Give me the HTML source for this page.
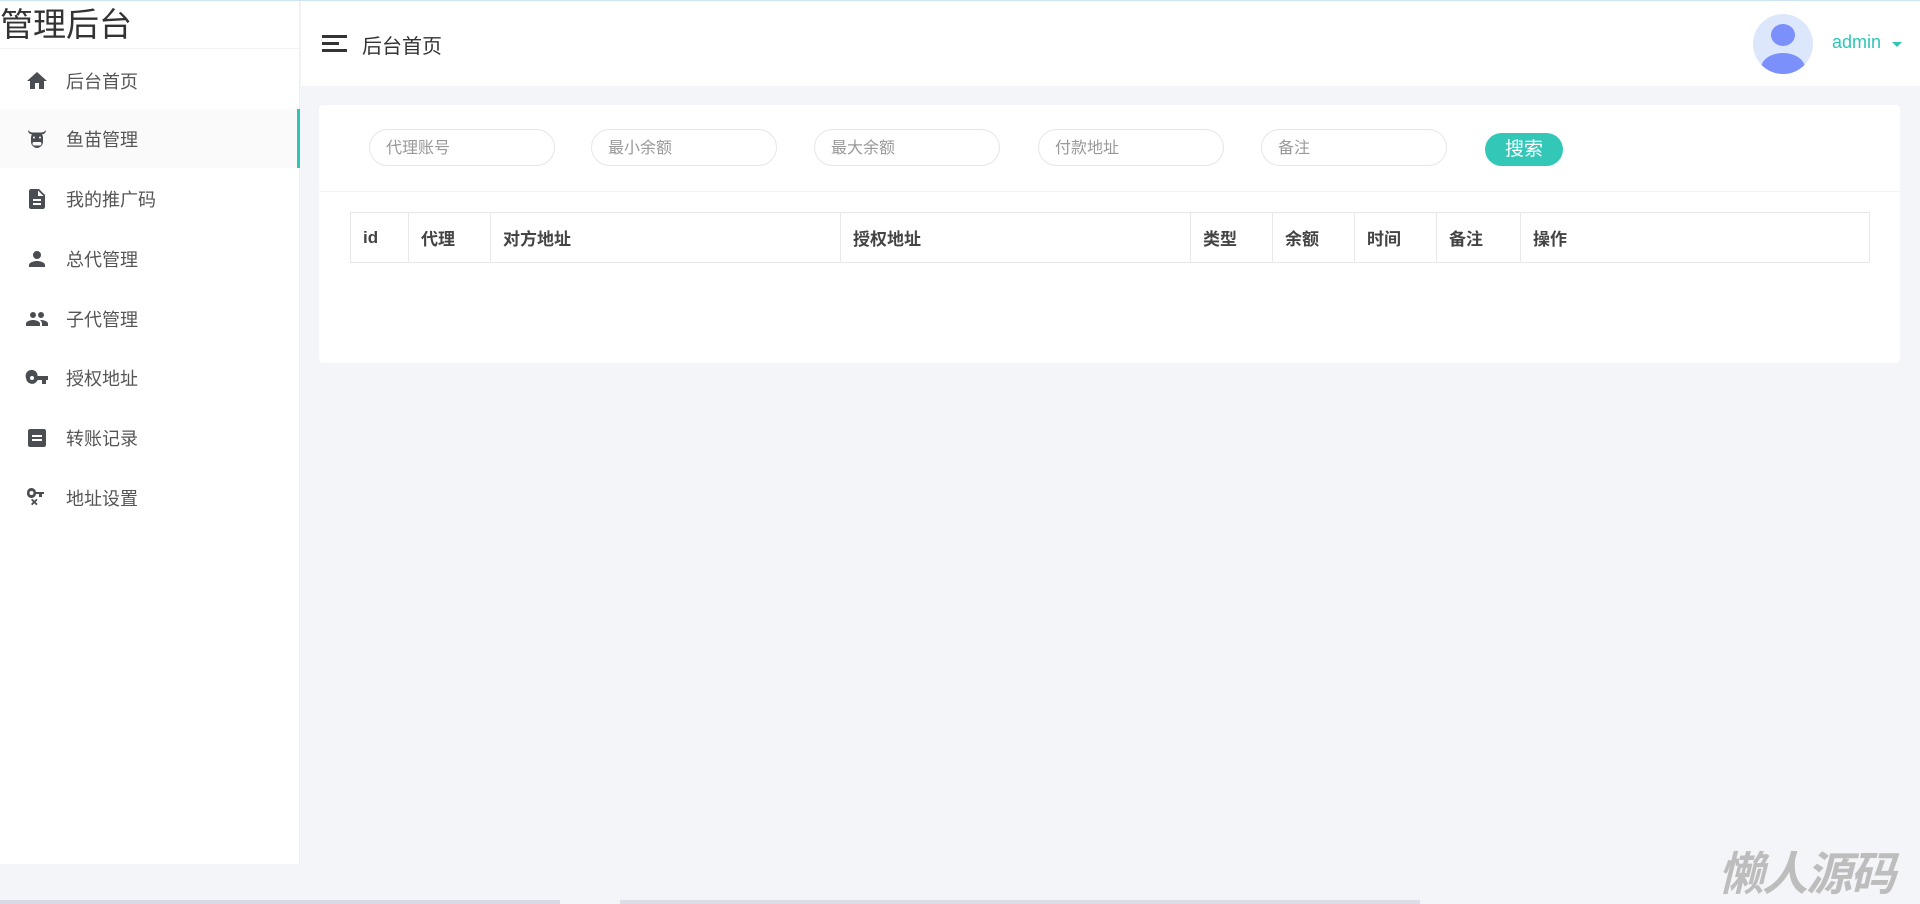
<!DOCTYPE html>
<html><head><meta charset="utf-8"><style>
*{margin:0;padding:0;box-sizing:border-box}
body{width:1920px;height:904px;overflow:hidden;background:#f4f5f9;font-family:"Liberation Sans","Noto Sans CJK SC",sans-serif;position:relative;color:#444}
.top{position:absolute;left:0;top:0;width:1920px;height:1px;background:#cfe3f3;z-index:5}
.side{position:absolute;left:0;top:0;width:300px;height:864px;background:#fff;border-right:1px solid #eceef2}
.logo{height:49px;font-size:33px;line-height:50px;color:#333;border-bottom:1px solid #f2f2f2;white-space:nowrap}
.item{position:absolute;left:0;width:300px;height:59px;display:flex;align-items:center;font-size:18px;color:#555}
.item svg{position:absolute;left:25px;top:50%;margin-top:-12px;width:24px;height:24px;fill:#4a4d52}
.item span{position:absolute;left:66px}
.act{background:#fafafa;border-right:3px solid #2ec5b6}
.head{position:absolute;left:301px;top:0;width:1619px;height:86px;background:#fff}
.main{position:absolute;left:319px;top:105px;width:1581px;height:258px;background:#fff;border-radius:4px}
.inp{position:absolute;top:24px;width:186px;height:37px;border:1px solid #e6e6e6;border-radius:19px;font-size:16px;color:#999;padding-left:16px;line-height:38px}
.btn{position:absolute;left:1166px;top:28px;width:78px;height:33px;background:#33c7b8;border-radius:17px;color:#fff;font-size:19px;text-align:center;line-height:33px}
.div{position:absolute;left:0;top:86px;width:100%;height:1px;background:#f3f3f3}
table{position:absolute;left:31px;top:107px;width:1520px;height:51px;border-collapse:collapse}
td{border:1px solid #e8e8e8;font-weight:bold;font-size:17px;color:#444;padding-left:12px}
</style></head><body>
<div class="top"></div>
<div class="side">
<div class="logo">管理后台</div>
<div class="item" style="top:51px"><svg viewBox="0 0 24 24"><path d="M10 20v-6h4v6h5v-8h3L12 3 2 12h3v8z"/></svg><span>后台首页</span></div>
<div class="item act" style="top:109px"><svg viewBox="0 0 24 24"><path d="M3 3c0 3 2 4 4 4.5C6 9 6 10 6 11v4c0 3 3 6 6 6s6-3 6-6v-4c0-1 0-2-1-3.5C19 7 21 6 21 3c-1 1.5-3 2.5-5 2.5H8C6 5.5 4 4.5 3 3zm6 6.5a1 1 0 110 2 1 1 0 010-2zm6 0a1 1 0 110 2 1 1 0 010-2zM9 15h6c1 0 1.5.8 1.5 1.5S16 18.5 15 18.5H9c-1 0-1.5-1-1.5-2S8 15 9 15z"/></svg><span>鱼苗管理</span></div>
<div class="item" style="top:169px"><svg viewBox="0 0 24 24"><path d="M14 2H6c-1.1 0-2 .9-2 2v16c0 1.1.9 2 2 2h12c1.1 0 2-.9 2-2V8l-6-6zm2 16H8v-2h8v2zm0-4H8v-2h8v2zm-3-5V3.5L18.5 9H13z"/></svg><span>我的推广码</span></div>
<div class="item" style="top:229px"><svg viewBox="0 0 24 24"><path d="M12 12a4 4 0 100-8 4 4 0 000 8zm0 2c-2.7 0-8 1.3-8 4v2h16v-2c0-2.7-5.3-4-8-4z"/></svg><span>总代管理</span></div>
<div class="item" style="top:289px"><svg viewBox="0 0 24 24"><path d="M16 11a3 3 0 100-6 3 3 0 000 6zm-8 0a3 3 0 100-6 3 3 0 000 6zm0 2c-2.3 0-7 1.2-7 3.5V19h14v-2.5C15 14.2 10.3 13 8 13zm8 0c-.3 0-.6 0-1 .1 1.2.8 2 2 2 3.4V19h6v-2.5c0-2.3-4.7-3.5-7-3.5z"/></svg><span>子代管理</span></div>
<div class="item" style="top:348px"><svg viewBox="0 0 24 24"><path d="M12.6 10A6 6 0 101 12a6 6 0 0011.6 2H17v4h4v-4h2v-4H12.6zM7 14a2 2 0 110-4 2 2 0 010 4z"/></svg><span>授权地址</span></div>
<div class="item" style="top:408px"><svg viewBox="0 0 24 24"><path d="M19 3H5c-1.1 0-2 .9-2 2v14c0 1.1.9 2 2 2h14c1.1 0 2-.9 2-2V5c0-1.1-.9-2-2-2zm-2 12H7v-2h10v2zm0-4H7V9h10v2z"/></svg><span>转账记录</span></div>
<div class="item" style="top:468px"><svg viewBox="0 0 24 24"><path d="M11 6A4.5 4.5 0 102 7a4.5 4.5 0 009 1h3v3h3V8h2V6h-8zM6.5 9a2 2 0 110-4 2 2 0 010 4zM6 14l2 2-2 2 1.3 1.3 2-2 2 2L12.6 18l-2-2 2-2-1.3-1.3-2 2-2-2z"/></svg><span>地址设置</span></div>
</div>
<div class="head">
<div style="position:absolute;left:21px;top:35px;width:25px;height:3px;background:#333"></div>
<div style="position:absolute;left:21px;top:42px;width:17px;height:3px;background:#333"></div>
<div style="position:absolute;left:21px;top:49px;width:25px;height:3px;background:#333"></div>
<div style="position:absolute;left:61px;top:30px;font-size:20px;color:#333">后台首页</div>
<svg style="position:absolute;left:1452px;top:14px" width="60" height="60" viewBox="0 0 60 60"><defs><clipPath id="c"><circle cx="30" cy="30" r="30"/></clipPath></defs><circle cx="30" cy="30" r="30" fill="#dde7fb"/><g clip-path="url(#c)" fill="#7b90fb"><ellipse cx="30" cy="21" rx="12" ry="11"/><ellipse cx="30" cy="54" rx="22" ry="15"/></g></svg>
<div style="position:absolute;left:1531px;top:32px;font-size:18px;color:#2ec5b6">admin</div>
<div style="position:absolute;left:1591px;top:42px;width:0;height:0;border-left:5px solid transparent;border-right:5px solid transparent;border-top:5px solid #2ec5b6"></div>
</div>
<div class="main">
<div class="inp" style="left:50px">代理账号</div>
<div class="inp" style="left:272px">最小余额</div>
<div class="inp" style="left:495px">最大余额</div>
<div class="inp" style="left:719px">付款地址</div>
<div class="inp" style="left:942px">备注</div>
<div class="btn">搜索</div>
<div class="div"></div>
<table><tr><td style="width:58px">id</td><td style="width:82px">代理</td><td style="width:350px">对方地址</td><td style="width:350px">授权地址</td><td style="width:82px">类型</td><td style="width:82px">余额</td><td style="width:82px">时间</td><td style="width:84px">备注</td><td>操作</td></tr></table>
</div>
<div style="position:absolute;left:1718px;top:838px;font-size:46px;font-weight:bold;font-style:italic;color:#bdbdbd;letter-spacing:-2px">懒人源码</div>
<div style="position:absolute;left:0;top:900px;width:560px;height:4px;background:#d9dae6"></div>
<div style="position:absolute;left:620px;top:900px;width:800px;height:4px;background:#dcdde6"></div>
</body></html>
